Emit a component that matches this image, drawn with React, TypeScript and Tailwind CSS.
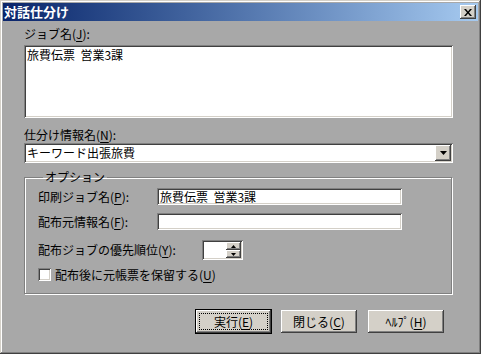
import React from 'react';

// classic 3D edges
const sunken =
  'shadow-[inset_1px_1px_0_#808080,inset_-1px_-1px_0_#ffffff,inset_2px_2px_0_#404040,inset_-2px_-2px_0_#d4d0c8]';
const raised =
  'shadow-[inset_-1px_-1px_0_#404040,inset_1px_1px_0_#ffffff,inset_-2px_-2px_0_#808080,inset_2px_2px_0_#d4d0c8]';

const Key: React.FC<{ k: string }> = ({ k }) => (
  <>
    (<u className="underline underline-offset-2">{k}</u>)
  </>
);

const DownTri: React.FC<{ w?: number; h?: number }> = ({ w = 7, h = 4 }) => (
  <svg width={w} height={h} viewBox={`0 0 ${w} ${h}`}>
    <polygon points={`0,0 ${w},0 ${w / 2},${h}`} fill="#000" />
  </svg>
);

const UpTri: React.FC<{ w?: number; h?: number }> = ({ w = 5, h = 3 }) => (
  <svg width={w} height={h} viewBox={`0 0 ${w} ${h}`}>
    <polygon points={`0,${h} ${w},${h} ${w / 2},0`} fill="#000" />
  </svg>
);

const App: React.FC = () => {
  return (
    <div
      className={`w-[481px] h-[354px] bg-[#a8a8a8] p-[3px] flex flex-col text-[12px] leading-[14px] text-black font-['Noto_Sans_CJK_JP',sans-serif] shadow-[inset_-1px_-1px_0_#404040,inset_1px_1px_0_#d4d0c8,inset_-2px_-2px_0_#808080,inset_2px_2px_0_#ffffff]`}
    >
      {/* Title bar */}
      <div className="h-[18px] flex items-center justify-between bg-linear-to-r from-[#0a246a] to-[#a6caf0] pl-[1px] pr-[2px]">
        <span className="text-white font-bold text-[13px] leading-[16px]">対話仕分け</span>
        <div className={`w-[16px] h-[14px] bg-[#d4d0c8] flex items-center justify-center ${raised}`}>
          <svg width="8" height="7" viewBox="0 0 8 7">
            <path d="M0 0h2l2 2.5L6 0h2L5 3.5 8 7H6L4 4.5 2 7H0l3-3.5z" fill="#000" />
          </svg>
        </div>
      </div>

      <div className="flex flex-col pl-[21px] pr-[25px]">
        {/* job name */}
        <div className="mt-[6px]">
          ジョブ名<Key k="J" />:
        </div>
        <div className={`mt-[4px] h-[73px] bg-white px-[3px] pt-[3px] ${sunken}`}>旅費伝票&nbsp;&nbsp;営業3課</div>

        {/* sorting info */}
        <div className="mt-[10px]">
          仕分け情報名<Key k="N" />:
        </div>
        <div className={`mt-[1px] h-[20px] bg-white flex items-center pl-[3px] pr-[2px] ${sunken}`}>
          <span className="flex-1">キーワード出張旅費</span>
          <div className={`w-[16px] h-[16px] bg-[#d4d0c8] flex items-center justify-center ${raised}`}>
            <DownTri />
          </div>
        </div>

        {/* options */}
        <fieldset className="mt-[7px] border border-[#808080] shadow-[inset_1px_1px_0_#ffffff,1px_1px_0_#ffffff] pl-[13px] pb-[12px] mr-[1px]">
          <legend className="ml-[5px] px-[2px] leading-[14px]">オプション</legend>
          <div className="mt-[4px] flex items-center h-[17px]">
            <span className="w-[119px]">
              印刷ジョブ名<Key k="P" />:
            </span>
            <div className={`w-[245px] h-[17px] bg-white pl-[3px] flex items-center ${sunken}`}>
              旅費伝票&nbsp;&nbsp;営業3課
            </div>
          </div>
          <div className="mt-[8px] flex items-center h-[17px]">
            <span className="w-[119px]">
              配布元情報名<Key k="F" />:
            </span>
            <div className={`w-[245px] h-[17px] bg-white ${sunken}`} />
          </div>
          <div className="mt-[10px] flex items-center h-[20px]">
            <span className="w-[164px]">
              配布ジョブの優先順位<Key k="Y" />:
            </span>
            <div className={`w-[41px] h-[20px] bg-white flex pt-[2px] pb-[2px] pr-[2px] ${sunken}`}>
              <div className="flex-1" />
              <div className="w-[15px] flex flex-col">
                <div className={`h-[8px] bg-[#d4d0c8] flex items-center justify-center ${raised}`}>
                  <UpTri />
                </div>
                <div className={`h-[8px] bg-[#d4d0c8] flex items-center justify-center ${raised}`}>
                  <DownTri w={5} h={3} />
                </div>
              </div>
            </div>
          </div>
          <div className="mt-[8px] flex items-center h-[13px]">
            <div className={`w-[13px] h-[13px] bg-white ${sunken}`} />
            <span className="ml-[4px]">
              配布後に元帳票を保留する<Key k="U" />
            </span>
          </div>
        </fieldset>
      </div>

      {/* buttons */}
      <div className="mt-[15px] flex items-center justify-end pr-[34px]">
        <div className="w-[77px] h-[25px] border border-black">
          <div className={`w-full h-full bg-[#d4d0c8] p-[3px] ${raised}`}>
            <div className="w-full h-full border border-dotted border-black flex items-center justify-center">
              実行<Key k="E" />
            </div>
          </div>
        </div>
        <div className={`ml-[9px] w-[76px] h-[23px] bg-[#d4d0c8] flex items-center justify-center ${raised}`}>
          閉じる<Key k="C" />
        </div>
        <div className={`ml-[11px] w-[76px] h-[23px] bg-[#d4d0c8] flex items-center justify-center ${raised}`}>
          ﾍﾙﾌﾟ<Key k="H" />
        </div>
      </div>
    </div>
  );
};

export default App;
